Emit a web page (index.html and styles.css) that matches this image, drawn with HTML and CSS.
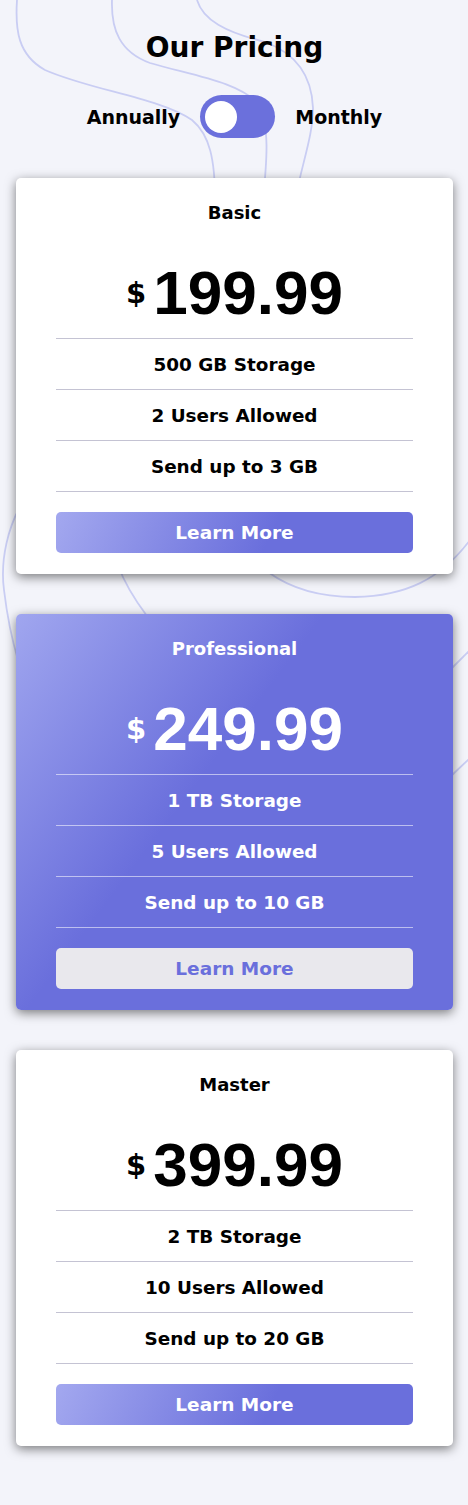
FILE: index.html
```html
<!DOCTYPE html>
<html lang="en">
<head>
<meta charset="utf-8">
<title>Our Pricing</title>
<link rel="stylesheet" href="styles.css">
</head>
<body>
<div class="page">
  <svg class="bg-lines" width="468" height="800" viewBox="0 0 468 800" aria-hidden="true">
    <g fill="none" stroke="#c9cdf3" stroke-width="1.8">
      <path d="M17 0 C15 30 18 55 45 70 C90 90 160 98 192 120 C210 135 215 160 215 200"/>
      <path d="M112 0 C111 30 120 52 150 63 C190 75 240 82 258 104 C270 125 267 160 263 200"/>
      <path d="M197 0 C203 20 225 32 265 42 C300 55 312 80 313 108 C313 135 303 160 295 200"/>
      <path d="M24 500 C8 525 0 560 4 590 C7 615 12 640 18 660"/>
      <path d="M118 565 C125 585 135 600 147 616"/>
      <path d="M268 572 C290 588 320 597 355 597 C405 596 440 580 470 540"/>
      <path d="M450 670 L470 650"/>
      <path d="M450 777 L470 758"/>
    </g>
  </svg>

  <h1 class="title">Our Pricing</h1>

  <div class="switch-row">
    <span class="switch-label">Annually</span>
    <span class="switch"><span class="knob"></span></span>
    <span class="switch-label">Monthly</span>
  </div>

  <div class="cards">
    <section class="card">
      <h2 class="plan">Basic</h2>
      <div class="price"><span class="currency">$</span><span class="amount">199.99</span></div>
      <ul class="features">
        <li>500 GB Storage</li>
        <li>2 Users Allowed</li>
        <li>Send up to 3 GB</li>
      </ul>
      <button class="btn">Learn More</button>
    </section>

    <section class="card card-featured">
      <h2 class="plan">Professional</h2>
      <div class="price"><span class="currency">$</span><span class="amount">249.99</span></div>
      <ul class="features">
        <li>1 TB Storage</li>
        <li>5 Users Allowed</li>
        <li>Send up to 10 GB</li>
      </ul>
      <button class="btn">Learn More</button>
    </section>

    <section class="card">
      <h2 class="plan">Master</h2>
      <div class="price"><span class="currency">$</span><span class="amount">399.99</span></div>
      <ul class="features">
        <li>2 TB Storage</li>
        <li>10 Users Allowed</li>
        <li>Send up to 20 GB</li>
      </ul>
      <button class="btn">Learn More</button>
    </section>
  </div>
</div>
</body>
</html>
```

FILE: styles.css
```css
* { box-sizing: border-box; }

html, body {
  margin: 0;
  padding: 0;
  background: #f3f4fa;
}

body {
  font-family: "DejaVu Sans", "Liberation Sans", sans-serif;
  color: #000;
}

.page {
  position: relative;
  padding: 31px 15px 59px 16px;
  display: flex;
  flex-direction: column;
  align-items: stretch;
}

.bg-lines {
  position: absolute;
  top: 0;
  left: 0;
  z-index: 0;
}

.title {
  position: relative;
  margin: 0;
  font-size: 28px;
  line-height: 34px;
  font-weight: bold;
  text-align: center;
}

.switch-row {
  position: relative;
  margin-top: 30px;
  height: 43px;
  display: flex;
  justify-content: center;
  align-items: center;
  gap: 20px;
}

.switch-label {
  font-size: 19px;
  font-weight: bold;
}

.switch {
  width: 75px;
  height: 43px;
  border-radius: 22px;
  background: #6b70dc;
  display: flex;
  align-items: center;
  padding-left: 5px;
}

.knob {
  width: 32px;
  height: 32px;
  border-radius: 50%;
  background: #fff;
}

.cards {
  position: relative;
  margin-top: 40px;
  display: flex;
  flex-direction: column;
  gap: 40px;
}

.card {
  background: #fff;
  border-radius: 5px;
  box-shadow: 0 3px 11px rgba(0, 0, 0, 0.5);
  padding: 24px 40px 21px;
  display: flex;
  flex-direction: column;
  align-items: stretch;
}

.plan {
  margin: 0;
  font-size: 18px;
  line-height: 22px;
  font-weight: bold;
  text-align: center;
}

.price {
  height: 114px;
  padding-top: 24px;
  display: flex;
  justify-content: center;
  align-items: center;
  gap: 7px;
}

.currency {
  font-size: 29px;
  font-weight: bold;
  line-height: 1;
}

.amount {
  font-family: "Liberation Sans", Arial, sans-serif;
  font-size: 62px;
  font-weight: bold;
  line-height: 1;
}

.features {
  list-style: none;
  margin: 0;
  padding: 0;
  border-top: 1px solid #c4c3d3;
}

.features li {
  height: 51px;
  border-bottom: 1px solid #c4c3d3;
  display: flex;
  align-items: center;
  justify-content: center;
  font-size: 18.4px;
  font-weight: bold;
}

.btn {
  margin-top: 20px;
  height: 41px;
  border: 0;
  border-radius: 5px;
  background: linear-gradient(115deg, #a3a8ef 0%, #6a6fdc 60%);
  color: #fff;
  font-family: "DejaVu Sans", "Liberation Sans", sans-serif;
  font-size: 18.5px;
  font-weight: bold;
  cursor: pointer;
}

.card-featured {
  background: linear-gradient(127deg, #a0a6ef 0%, #6a6fdc 42%);
  color: #fff;
}

.card-featured .features,
.card-featured .features li {
  border-color: rgba(255, 255, 255, 0.55);
}

.card-featured .btn {
  background: #e9e8ed;
  color: #6a6fdc;
}
```
